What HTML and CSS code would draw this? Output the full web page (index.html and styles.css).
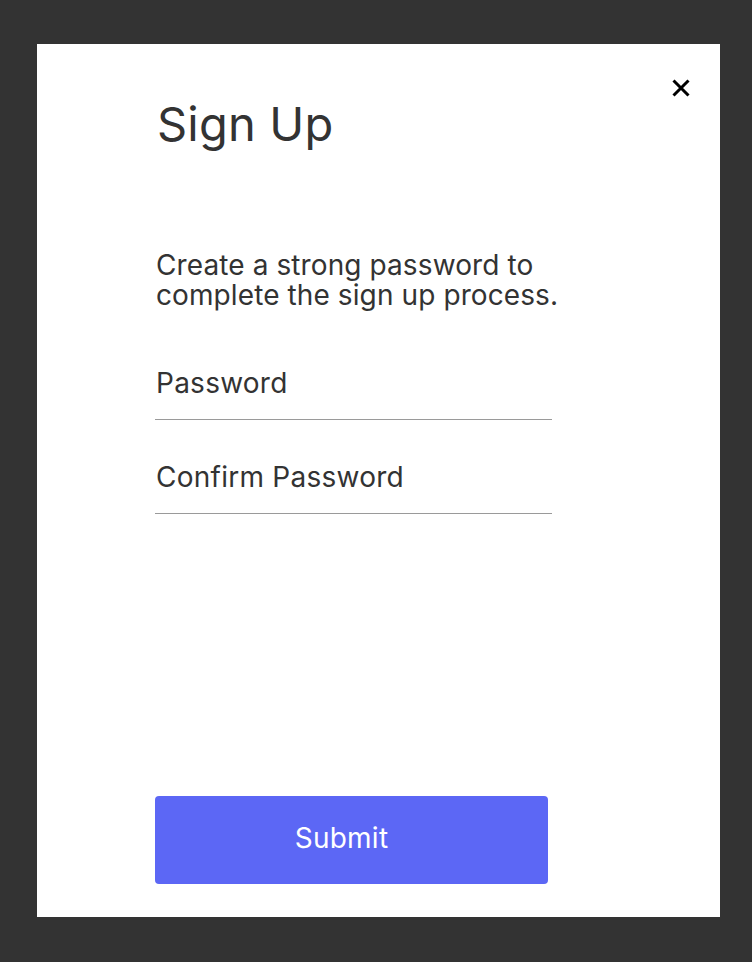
FILE: index.html
```html
<!DOCTYPE html>
<html lang="en">
<head>
<meta charset="utf-8">
<title>Sign Up</title>
<link rel="stylesheet" href="styles.css">
</head>
<body>
<div class="modal">
  <button class="close" aria-label="Close">
    <svg width="18" height="18" viewBox="0 0 18 18"><path d="M1.5 1.5L16.5 16.5M16.5 1.5L1.5 16.5" stroke="#000" stroke-width="3"/></svg>
  </button>
  <div class="content">
    <h1 class="title">Sign Up</h1>
    <p class="intro">Create a strong password to complete the sign up process.</p>
    <div class="field first"><span class="label">Password</span></div>
    <div class="field second"><span class="label">Confirm Password</span></div>
    <div class="spacer"></div>
    <button class="submit">Submit</button>
  </div>
</div>
</body>
</html>
```
FILE: styles.css
```css
html, body { margin: 0; padding: 0; }
body {
  background: #333333;
  font-family: Inter, "Noto Sans", sans-serif;
  color: #333333;
  width: 752px;
  height: 962px;
  overflow: hidden;
}
.modal {
  position: relative;
  box-sizing: border-box;
  margin: 44px 0 0 37px;
  width: 683px;
  height: 873px;
  background: #ffffff;
  padding: 52px 0 33px 118px;
}
.close {
  position: absolute;
  top: 35px;
  left: 635px;
  width: 18px;
  height: 18px;
  padding: 0;
  border: 0;
  background: none;
  display: flex;
}
.content {
  width: 397px;
  height: 100%;
  display: flex;
  flex-direction: column;
}
.title {
  margin: 0;
  padding-left: 2px;
  font-size: 47px;
  line-height: 56px;
  font-weight: 400;
  letter-spacing: 0.2px;
}
.intro {
  margin: 98px 0 0 0;
  padding-left: 1px;
  width: 430px;
  font-size: 28px;
  line-height: 30px;
  letter-spacing: 0.1px;
}
.field {
  border-bottom: 1px solid #9a9a9a;
  font-size: 28px;
  line-height: 30px;
  letter-spacing: 0.25px;
  padding-bottom: 21px;
  padding-left: 1px;
}
.field.first { padding-top: 58px; }
.field.second { padding-top: 42px; }
.spacer { flex: 1; }
.submit {
  width: 393px;
  height: 88px;
  border: 0;
  border-radius: 4px;
  background: #5c67f5;
  color: #ffffff;
  font-family: inherit;
  font-size: 28px;
  letter-spacing: 0.25px;
  padding: 0 20px 4px 0;
}
```
